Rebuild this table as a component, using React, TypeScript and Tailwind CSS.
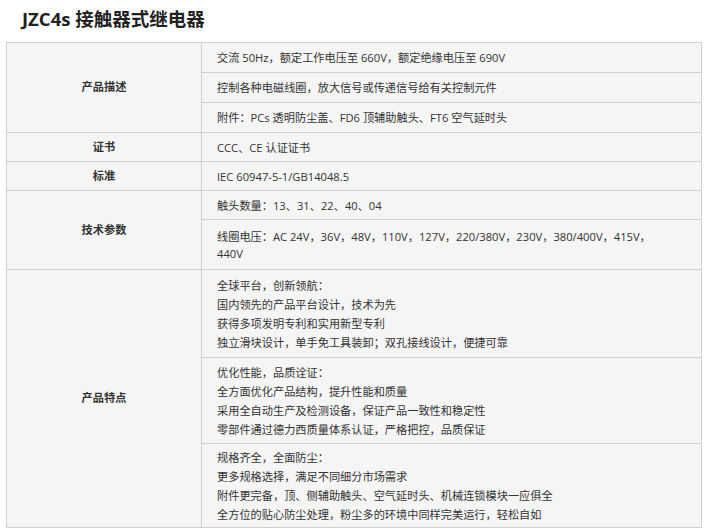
const font = { fontFamily: '"Open Sans", "Noto Sans CJK SC", sans-serif' };

type Cell = { lines: string[]; h: number; lh?: number };
type Group = { label: string; cells: Cell[] };

const groups: Group[] = [
  {
    label: '产品描述',
    cells: [
      { lines: ['交流 50Hz，额定工作电压至 660V，额定绝缘电压至 690V'], h: 30 },
      { lines: ['控制各种电磁线圈，放大信号或传递信号给有关控制元件'], h: 30 },
      { lines: ['附件：PCs 透明防尘盖、FD6 顶辅助触头、FT6 空气延时头'], h: 30 },
    ],
  },
  { label: '证书', cells: [{ lines: ['CCC、CE 认证证书'], h: 29 }] },
  { label: '标准', cells: [{ lines: ['IEC 60947-5-1/GB14048.5'], h: 29 }] },
  {
    label: '技术参数',
    cells: [
      { lines: ['触头数量：13、31、22、40、04'], h: 29 },
      {
        lines: ['线圈电压：AC 24V，36V，48V，110V，127V，220/380V，230V，380/400V，415V，', '440V'],
        h: 50,
        lh: 17,
      },
    ],
  },
  {
    label: '产品特点',
    cells: [
      {
        lines: ['全球平台，创新领航：', '国内领先的产品平台设计，技术为先', '获得多项发明专利和实用新型专利', '独立滑块设计，单手免工具装卸；双孔接线设计，便捷可靠'],
        h: 88,
      },
      {
        lines: ['优化性能，品质诠证：', '全方面优化产品结构，提升性能和质量', '采用全自动生产及检测设备，保证产品一致性和稳定性', '零部件通过德力西质量体系认证，严格把控，品质保证'],
        h: 86,
      },
      {
        lines: ['规格齐全，全面防尘：', '更多规格选择，满足不同细分市场需求', '附件更完备，顶、侧辅助触头、空气延时头、机械连锁模块一应俱全', '全方位的贴心防尘处理，粉尘多的环境中同样完美运行，轻松自如'],
        h: 84,
      },
    ],
  },
];

export default function App() {
  return (
    <div className="w-[708px] h-[532px] bg-white text-[#333]" style={font}>
      <h1 className="pl-[22px] pt-[6px] h-[42px] text-[18.5px] font-bold leading-[25px] text-[#222]">
        JZC4s 接触器式继电器
      </h1>
      <div className="ml-[6px] w-[696px] border-x border-t border-[#cfcfcf] bg-[#f5f5f5] text-[11.2px]">
        {groups.map((g) => (
          <div key={g.label} className="flex">
            <div className="flex w-[195px] shrink-0 items-center justify-center border-r border-b border-[#cfcfcf] font-bold">
              {g.label}
            </div>
            <div className="flex flex-1 flex-col">
              {g.cells.map((c, j) => (
                <div
                  key={j}
                  className="flex flex-col justify-center border-b border-[#cfcfcf] pl-[15px]"
                  style={{ height: c.h, lineHeight: `${c.lh ?? 19}px` }}
                >
                  {c.lines.map((l, k) => (
                    <div key={k} className="whitespace-nowrap">
                      {l}
                    </div>
                  ))}
                </div>
              ))}
            </div>
          </div>
        ))}
      </div>
    </div>
  );
}
